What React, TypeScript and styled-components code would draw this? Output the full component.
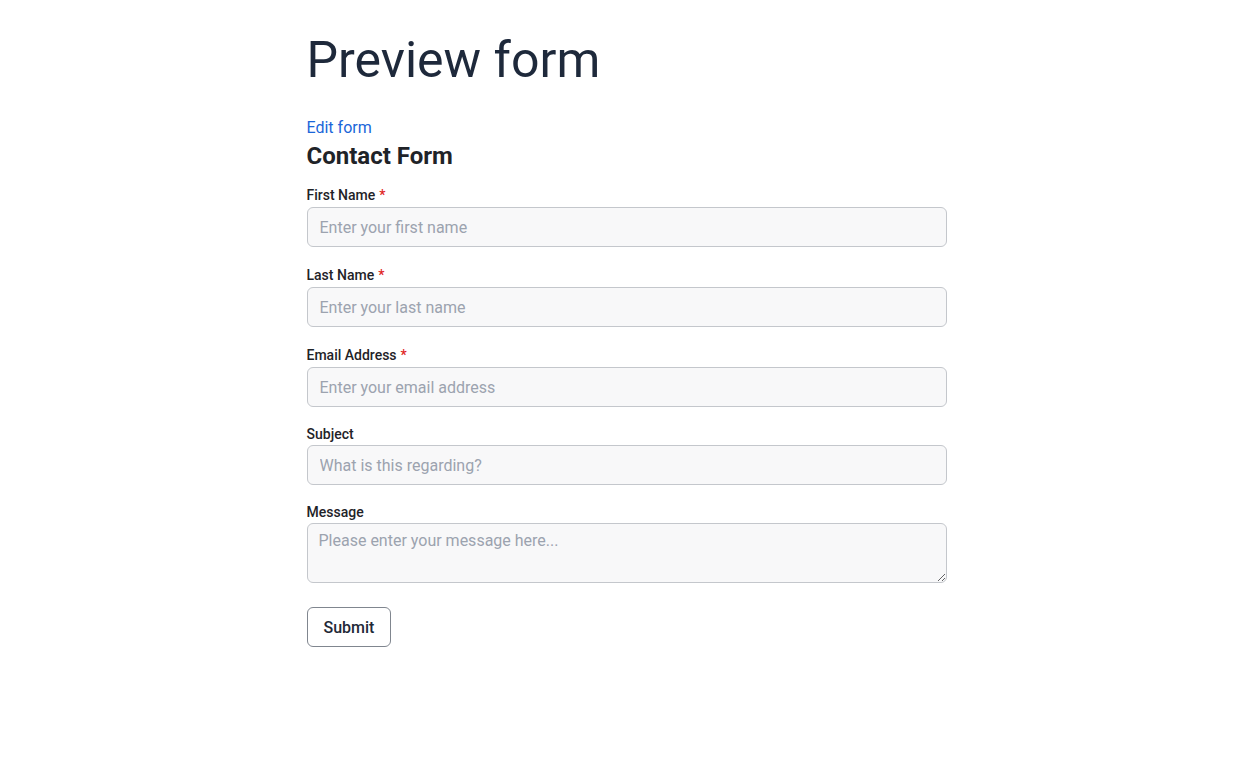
import React from 'react';
import styled, { createGlobalStyle } from 'styled-components';

const GlobalStyle = createGlobalStyle`
  * {
    box-sizing: border-box;
  }

  body {
    margin: 0;
    background: #ffffff;
    font-family: Roboto, "Liberation Sans", sans-serif;
    color: #1f2937;
  }
`;

const Page = styled.main`
  width: 640px;
  margin: 0 auto;
  padding-top: 29px;
`;

const PageTitle = styled.h1`
  margin: 0 0 27px;
  font-size: 50px;
  font-weight: 400;
  line-height: 62px;
  color: #1e293b;
`;

const EditLink = styled.a`
  display: block;
  font-size: 16px;
  line-height: 20px;
  color: #1a66d9;
  text-decoration: none;
`;

const FormTitle = styled.h2`
  margin: 2px 0 15px;
  font-size: 24px;
  font-weight: 700;
  line-height: 32px;
  color: #1f2328;
`;

const Form = styled.form`
  display: flex;
  flex-direction: column;
  gap: 20px;
`;

const Field = styled.div`
  display: flex;
  flex-direction: column;
  gap: 4px;
`;

const Label = styled.label`
  font-size: 14px;
  font-weight: 500;
  line-height: 14px;
  color: #1f2328;
`;

const Required = styled.span`
  margin-left: 4px;
  line-height: 16px;
  color: #e02424;
`;

const Input = styled.input`
  width: 100%;
  height: 40px;
  padding: 0 12px;
  border: 1px solid #c4c7cc;
  border-radius: 6px;
  background: #f8f8f9;
  font-family: inherit;
  font-size: 16px;
  color: #1f2328;

  &::placeholder {
    color: #9ca3af;
  }
`;

const TextArea = styled.textarea`
  width: 100%;
  height: 60px;
  padding: 7px 11px;
  border: 1px solid #c4c7cc;
  border-radius: 6px;
  background: #f8f8f9;
  font-family: inherit;
  font-size: 16px;
  color: #1f2328;

  &::placeholder {
    color: #9ca3af;
  }
`;

const SubmitButton = styled.button`
  align-self: flex-start;
  height: 40px;
  margin-top: 4px;
  padding: 0 16px;
  border: 1px solid #80868f;
  border-radius: 6px;
  background: #ffffff;
  font-family: inherit;
  font-size: 16px;
  font-weight: 500;
  color: #1f2937;
`;

type FieldDef = {
  id: string;
  label: string;
  placeholder: string;
  required?: boolean;
  type?: string;
};

const fields: FieldDef[] = [
  { id: 'firstName', label: 'First Name', placeholder: 'Enter your first name', required: true },
  { id: 'lastName', label: 'Last Name', placeholder: 'Enter your last name', required: true },
  { id: 'email', label: 'Email Address', placeholder: 'Enter your email address', required: true, type: 'email' },
  { id: 'subject', label: 'Subject', placeholder: 'What is this regarding?' },
];

const App: React.FC = () => {
  return (
    <>
      <GlobalStyle />
      <Page>
        <PageTitle>Preview form</PageTitle>
        <EditLink href="#">Edit form</EditLink>
        <FormTitle>Contact Form</FormTitle>
        <Form onSubmit={(e) => e.preventDefault()}>
          {fields.map((f) => (
            <Field key={f.id}>
              <Label htmlFor={f.id}>
                {f.label}
                {f.required && <Required>*</Required>}
              </Label>
              <Input id={f.id} type={f.type ?? 'text'} placeholder={f.placeholder} />
            </Field>
          ))}
          <Field>
            <Label htmlFor="message">Message</Label>
            <TextArea id="message" placeholder="Please enter your message here..." />
          </Field>
          <SubmitButton type="submit">Submit</SubmitButton>
        </Form>
      </Page>
    </>
  );
};

export default App;
